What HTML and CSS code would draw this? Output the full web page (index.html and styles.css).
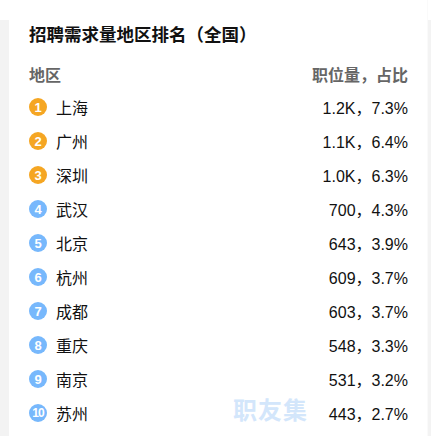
FILE: index.html
```html
<!DOCTYPE html>
<html lang="zh">
<head>
<meta charset="utf-8">
<link rel="stylesheet" href="styles.css">
</head>
<body>
<div class="page">
  <div class="card">
    <h1 class="title">招聘需求量地区排名（全国）</h1>
    <div class="head">
      <span>地区</span>
      <span>职位量，占比</span>
    </div>
    <ul class="list">
      <li class="row"><span class="city"><i class="badge top">1</i>上海</span><span class="val">1.2K，7.3%</span></li>
      <li class="row"><span class="city"><i class="badge top">2</i>广州</span><span class="val">1.1K，6.4%</span></li>
      <li class="row"><span class="city"><i class="badge top">3</i>深圳</span><span class="val">1.0K，6.3%</span></li>
      <li class="row"><span class="city"><i class="badge">4</i>武汉</span><span class="val">700，4.3%</span></li>
      <li class="row"><span class="city"><i class="badge">5</i>北京</span><span class="val">643，3.9%</span></li>
      <li class="row"><span class="city"><i class="badge">6</i>杭州</span><span class="val">609，3.7%</span></li>
      <li class="row"><span class="city"><i class="badge">7</i>成都</span><span class="val">603，3.7%</span></li>
      <li class="row"><span class="city"><i class="badge">8</i>重庆</span><span class="val">548，3.3%</span></li>
      <li class="row"><span class="city"><i class="badge">9</i>南京</span><span class="val">531，3.2%</span></li>
      <li class="row"><span class="city"><i class="badge ten">10</i>苏州</span><span class="val">443，2.7%</span></li>
    </ul>
    <div class="watermark">职友集</div>
  </div>
</div>
</body>
</html>
```
FILE: styles.css
```css
* { box-sizing: border-box; margin: 0; padding: 0; }
html, body { width: 431px; height: 436px; overflow: hidden; }
body {
  background: #f3f3f3;
  font-family: "Liberation Sans", "Noto Sans CJK SC", sans-serif;
  color: #111;
}
.page {
  padding-left: 9px;
  height: 436px;
  background: linear-gradient(#fff, #fff) no-repeat 0 0 / 100% 20px, #f3f3f3;
}
.card {
  position: relative;
  width: 419px;
  height: 436px;
  background: #fff;
  padding: 24px 19px 0 20px;
  border-right: 1px solid #fafafa;
}
.title {
  font-size: 17.5px;
  font-weight: bold;
  line-height: 22px;
  color: #111;
}
.head {
  display: flex;
  justify-content: space-between;
  margin-top: 18px;
  font-size: 16px;
  font-weight: bold;
  color: #666;
  line-height: 24px;
}
.list { list-style: none; margin-top: 2px; }
.row {
  display: flex;
  justify-content: space-between;
  align-items: center;
  height: 34px;
  font-size: 16px;
}
.city { display: flex; align-items: center; }
.badge {
  display: inline-flex;
  align-items: center;
  justify-content: center;
  width: 18px;
  height: 18px;
  border-radius: 50%;
  background: #77b8fc;
  color: #fff;
  font-style: normal;
  font-weight: bold;
  font-size: 13px;
  margin-right: 9px;
}
.badge.top { background: #f5a623; }
.badge.ten { font-size: 12px; letter-spacing: -1px; }
.val { font-size: 16px; color: #111; }
.watermark {
  position: absolute;
  left: 224px;
  top: 391px;
  font-size: 24px;
  font-weight: bold;
  color: #d3e6fb;
  letter-spacing: 1px;
}
```
